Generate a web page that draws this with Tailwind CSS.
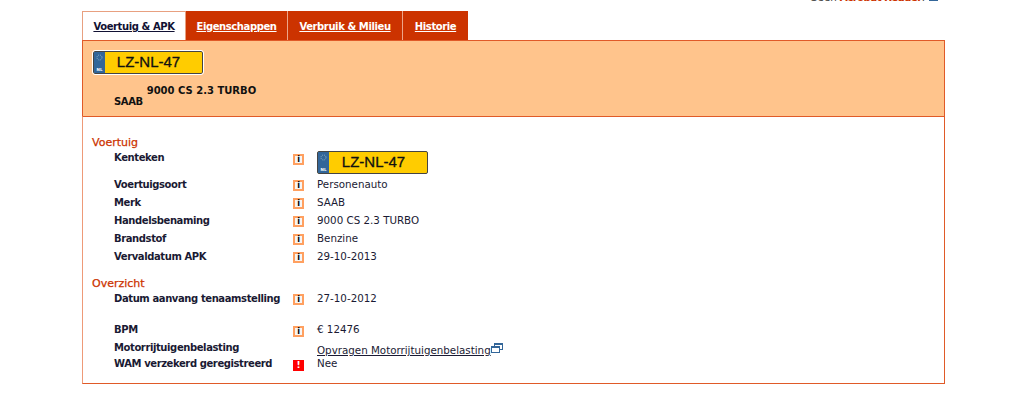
<!DOCTYPE html>
<html lang="nl">
<head>
  <meta charset="utf-8"/>
  <title>Voertuig &amp; APK</title>
  <script src="https://cdn.jsdelivr.net/npm/@tailwindcss/browser@4"></script>
</head>
<body class="bg-white h-[401px] overflow-hidden font-['DejaVu_Sans',sans-serif] text-[10.3px] text-[#1a1a33]">

  <!-- Acrobat regel, bovenaan afgesneden zoals in het origineel -->
  <div class="h-[11px] w-[938px] flex justify-end items-start">
    <div class="h-[14px] -mt-[10px] flex items-center shrink-0 leading-[14px] text-[#444]">
      <span>Geen</span>
      <a href="#" class="ml-[3px] font-bold tracking-[-0.6px] text-[#cc3300]">Acrobat Reader</a>
      <span>.</span>
      <svg class="ml-[4px]" width="9" height="8" viewBox="0 0 9 8"><rect x="0.5" y="0.5" width="8" height="7" fill="#fff" stroke="#336699"/></svg>
    </div>
  </div>

  <div class="ml-[82px] w-[863px]">
    <!-- Tabs -->
    <nav class="flex h-[29px] font-bold text-[10px] tracking-[-0.4px]">
      <a href="#" class="w-[104px] pt-[1px] flex items-center justify-center bg-white border border-b-0 border-[#e8a080] text-[#111133] underline">Voertuig &amp; APK</a>
      <a href="#" class="w-[102px] pt-[1px] flex items-center justify-center bg-[#cc3300] border-r border-[#eda58a] text-white underline">Eigenschappen</a>
      <a href="#" class="w-[115px] pt-[1px] flex items-center justify-center bg-[#cc3300] border-r border-[#eda58a] text-white underline">Verbruik &amp; Milieu</a>
      <a href="#" class="w-[65px] pt-[1px] flex items-center justify-center bg-[#cc3300] text-white underline">Historie</a>
    </nav>

    <!-- Samenvatting -->
    <section class="h-[76px] bg-[#ffc48c] border border-[#e05a28] border-b-0 pl-[10px] pt-[10px]">
      <div class="w-[110px] h-[23px] bg-[#ffcc00] border border-[#444] rounded-[2px] outline outline-1 outline-white flex">
        <div class="w-[11px] bg-[#336699] flex flex-col items-center justify-between pt-[2px] text-[4px] font-bold text-white leading-[7px]">
          <svg width="7" height="7" viewBox="0 0 7 7"><circle cx="3.5" cy="3.5" r="2.5" fill="none" stroke="#8fb3c9" stroke-dasharray="1 1"/></svg>
          <span>NL</span>
        </div>
        <div class="flex-1 flex items-center justify-center pr-[10px] font-['Liberation_Sans',sans-serif] text-[15px] text-[#111] [-webkit-text-stroke:0.3px_#111]">LZ-NL-47</div>
      </div>
      <div class="mt-[11px] -ml-[1px] flex font-bold text-[10px] leading-[12px] text-[#111]">
        <span class="ml-[22px] mt-[11px] tracking-[-0.4px]">SAAB</span>
        <span class="ml-[4px]">9000 CS 2.3 TURBO</span>
      </div>
    </section>

    <!-- Gegevens -->
    <section class="h-[268px] border border-[#e05a28] border-l-[#ee9a78] pl-[9px] pt-[19px]">
      <h2 class="text-[11px] leading-[13px] text-[#cc3300] [-webkit-text-stroke:0.25px_#cc3300]">Voertuig</h2>

      <div class="mt-[2px] grid grid-cols-[179px_24px_1fr] pl-[22px]">
        <div class="h-[27px] font-bold text-[10px] tracking-[-0.4px] leading-[13px]">Kenteken</div>
        <div class="pt-[3px]"><span class="flex w-[11px] h-[11px] items-center justify-center border-2 border-[#ffa060] bg-[#f5f5f5] font-bold text-[8px] leading-none text-black">i</span></div>
        <div>
          <div class="w-[111px] h-[23px] bg-[#ffcc00] border border-[#444] rounded-[2px] flex">
            <div class="w-[11px] bg-[#336699] flex flex-col items-center justify-between pt-[2px] text-[4px] font-bold text-white leading-[7px]">
              <svg width="7" height="7" viewBox="0 0 7 7"><circle cx="3.5" cy="3.5" r="2.5" fill="none" stroke="#8fb3c9" stroke-dasharray="1 1"/></svg>
              <span>NL</span>
            </div>
            <div class="flex-1 flex items-center justify-center pr-[9px] font-['Liberation_Sans',sans-serif] text-[15px] text-[#111] [-webkit-text-stroke:0.3px_#111]">LZ-NL-47</div>
          </div>
        </div>

        <div class="h-[18px] font-bold text-[10px] tracking-[-0.4px] leading-[13px]">Voertuigsoort</div>
        <div class="pt-[2px]"><span class="flex w-[11px] h-[11px] items-center justify-center border-2 border-[#ffa060] bg-[#f5f5f5] font-bold text-[8px] leading-none text-black">i</span></div>
        <div class="leading-[13px]">Personenauto</div>

        <div class="h-[18px] font-bold text-[10px] tracking-[-0.4px] leading-[13px]">Merk</div>
        <div class="pt-[2px]"><span class="flex w-[11px] h-[11px] items-center justify-center border-2 border-[#ffa060] bg-[#f5f5f5] font-bold text-[8px] leading-none text-black">i</span></div>
        <div class="leading-[13px]">SAAB</div>

        <div class="h-[18px] font-bold text-[10px] tracking-[-0.4px] leading-[13px]">Handelsbenaming</div>
        <div class="pt-[2px]"><span class="flex w-[11px] h-[11px] items-center justify-center border-2 border-[#ffa060] bg-[#f5f5f5] font-bold text-[8px] leading-none text-black">i</span></div>
        <div class="leading-[13px]">9000 CS 2.3 TURBO</div>

        <div class="h-[18px] font-bold text-[10px] tracking-[-0.4px] leading-[13px]">Brandstof</div>
        <div class="pt-[2px]"><span class="flex w-[11px] h-[11px] items-center justify-center border-2 border-[#ffa060] bg-[#f5f5f5] font-bold text-[8px] leading-none text-black">i</span></div>
        <div class="leading-[13px]">Benzine</div>

        <div class="h-[18px] font-bold text-[10px] tracking-[-0.4px] leading-[13px]">Vervaldatum APK</div>
        <div class="pt-[2px]"><span class="flex w-[11px] h-[11px] items-center justify-center border-2 border-[#ffa060] bg-[#f5f5f5] font-bold text-[8px] leading-none text-black">i</span></div>
        <div class="leading-[13px]">29-10-2013</div>
      </div>

      <h2 class="mt-[9px] text-[11px] leading-[13px] text-[#cc3300] [-webkit-text-stroke:0.25px_#cc3300]">Overzicht</h2>

      <div class="mt-[2px] grid grid-cols-[179px_24px_1fr] pl-[22px]">
        <div class="h-[31px] font-bold text-[10px] tracking-[-0.4px] leading-[13px]">Datum aanvang tenaamstelling</div>
        <div class="pt-[2px]"><span class="flex w-[11px] h-[11px] items-center justify-center border-2 border-[#ffa060] bg-[#f5f5f5] font-bold text-[8px] leading-none text-black">i</span></div>
        <div class="leading-[13px]">27-10-2012</div>

        <div class="h-[18px] font-bold text-[10px] tracking-[-0.4px] leading-[13px]">BPM</div>
        <div class="pt-[3px]"><span class="flex w-[11px] h-[11px] items-center justify-center border-2 border-[#ffa060] bg-[#f5f5f5] font-bold text-[8px] leading-none text-black">i</span></div>
        <div class="leading-[13px]">€ 12476</div>

        <div class="h-[16px] font-bold text-[10px] tracking-[-0.4px] leading-[13px]">Motorrijtuigenbelasting</div>
        <div></div>
        <div class="h-[16px] flex items-start pt-[3px] leading-[13px]">
          <a href="#" class="underline">Opvragen Motorrijtuigenbelasting</a>
          <svg class="-mt-[1px]" width="12" height="10" viewBox="0 0 12 10" fill="none" stroke="#336699"><rect x="3.5" y="0.5" width="8" height="6" fill="#fff"/><rect x="0.5" y="3.5" width="8" height="6" fill="#fff"/><path d="M1 4.5h7M4 1.5h7"/></svg>
        </div>

        <div class="h-[16px] font-bold text-[10px] tracking-[-0.4px] leading-[13px]">WAM verzekerd geregistreerd</div>
        <div class="pt-[3px]"><span class="flex w-[11px] h-[11px] items-center justify-center bg-[#ff0000] font-bold text-[9px] leading-none text-white">!</span></div>
        <div class="leading-[13px]">Nee</div>
      </div>
    </section>
  </div>
</body>
</html>
